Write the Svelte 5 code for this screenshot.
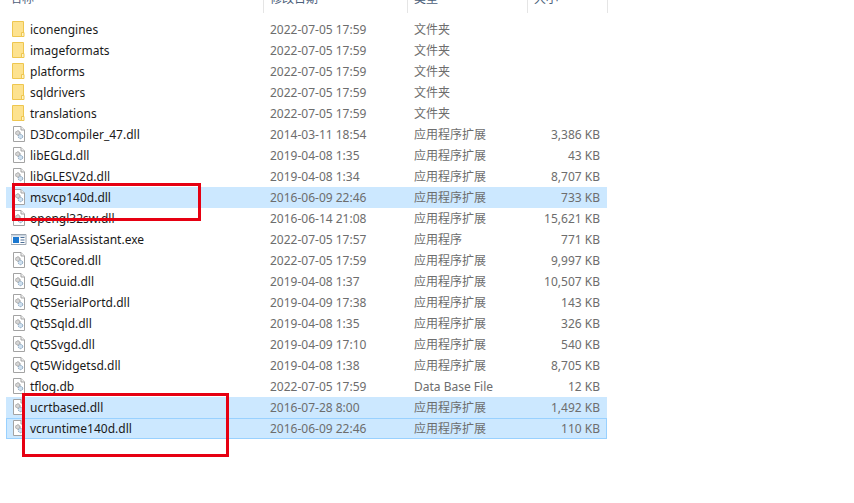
<script>
  const rows = [
    ['iconengines','2022-07-05 17:59','文件夹','','folder'],
    ['imageformats','2022-07-05 17:59','文件夹','','folder'],
    ['platforms','2022-07-05 17:59','文件夹','','folder'],
    ['sqldrivers','2022-07-05 17:59','文件夹','','folder'],
    ['translations','2022-07-05 17:59','文件夹','','folder'],
    ['D3Dcompiler_47.dll','2014-03-11 18:54','应用程序扩展','3,386 KB','dll'],
    ['libEGLd.dll','2019-04-08 1:35','应用程序扩展','43 KB','dll'],
    ['libGLESV2d.dll','2019-04-08 1:34','应用程序扩展','8,707 KB','dll'],
    ['msvcp140d.dll','2016-06-09 22:46','应用程序扩展','733 KB','dll','sel'],
    ['opengl32sw.dll','2016-06-14 21:08','应用程序扩展','15,621 KB','dll'],
    ['QSerialAssistant.exe','2022-07-05 17:57','应用程序','771 KB','exe'],
    ['Qt5Cored.dll','2022-07-05 17:59','应用程序扩展','9,997 KB','dll'],
    ['Qt5Guid.dll','2019-04-08 1:37','应用程序扩展','10,507 KB','dll'],
    ['Qt5SerialPortd.dll','2019-04-09 17:38','应用程序扩展','143 KB','dll'],
    ['Qt5Sqld.dll','2019-04-08 1:35','应用程序扩展','326 KB','dll'],
    ['Qt5Svgd.dll','2019-04-09 17:10','应用程序扩展','540 KB','dll'],
    ['Qt5Widgetsd.dll','2019-04-08 1:38','应用程序扩展','8,705 KB','dll'],
    ['tflog.db','2022-07-05 17:59','Data Base File','12 KB','dll'],
    ['ucrtbased.dll','2016-07-28 8:00','应用程序扩展','1,492 KB','dll','sel'],
    ['vcruntime140d.dll','2016-06-09 22:46','应用程序扩展','110 KB','dll','focus'],
  ];
</script>

<div class="page">
  <div class="head">
    <div class="hc first"><span>名称</span></div>
    <div class="hc"><span>修改日期</span></div>
    <div class="hc"><span>类型</span></div>
    <div class="hc"><span>大小</span></div>
  </div>
  <div class="list">
    {#each rows as r}
      <div class="row {r[5] ?? ''}">
        <div class="name">
          <svg class="icon" width="16" height="16" viewBox="0 0 16 16">
            {#if r[4] === 'folder'}
              <path d="M1.500 .5h11v15h-11z" fill="#fde28f" stroke="#eec64f"/>
              <path d="M10.500 15.500v-4h2.500v4z" fill="#fff3c4" stroke="#eec64f"/>
            {:else if r[4] === 'dll'}
              <path d="M2.500 .5h7.500l3.500 3.500v11.500h-11z" fill="#fff" stroke="#a3a3a3"/>
              <path d="M10 .5v3.500h3.500" fill="#f0f0f0" stroke="#a3a3a3"/>
              <circle cx="6.800" cy="7" r="2.200" fill="#d6d6d6" stroke="#939393" stroke-dasharray="1.500 .7"/>
              <circle cx="9.500" cy="10.500" r="2.200" fill="#cfe0ef" stroke="#86a3bd" stroke-dasharray="1.500 .7"/>
            {:else}
              <path d="M0 3.500h15v10H0z" fill="#fff" stroke="#9aa5b1"/>
              <path d="M.5 4h14v1.500H.5z" fill="#c8d4e0"/>
              <path d="M2 6h6v6H2z" fill="#1b78d0"/>
              <path d="M9.500 6.500h4M9.500 9h4M9.500 11.500h4" stroke="#4d6f96"/>
            {/if}
          </svg>
          <span>{r[0]}</span>
        </div>
        <div class="cell">{r[1]}</div>
        <div class="cell">{r[2]}</div>
        <div class="cell size">{r[3]}</div>
      </div>
    {/each}
  </div>
  <div class="mark m1"></div>
  <div class="mark m2"></div>
</div>

<style>
  :global(body) { margin: 0; background: #fff; }
  .page {
    position: relative;
    width: 854px;
    height: 503px;
    overflow: hidden;
    background: #fff;
    font: 12px/21px "Noto Sans", "Noto Sans CJK SC", sans-serif;
  }
  .head {
    display: grid;
    grid-template-columns: 258px 144px 120px 80px;
    margin-left: 6px;
    height: 13px;
    overflow: hidden;
    margin-bottom: 6px;
  }
  .hc {
    border-right: 1px solid #e5e5e5;
    color: #4c607a;
    height: 13px;
    line-height: 18px;
    padding-left: 6px;
    box-sizing: border-box;
  }
  .hc span { display: block; margin-top: -10px; }
  .hc.first { padding-left: 4px; }
  .list { margin-left: 6px; width: 601px; }
  .row {
    display: grid;
    grid-template-columns: 258px 144px 120px 79px;
    height: 21px;
    box-sizing: border-box;
    color: #6d6d6d;
  }
  .row.sel { background: #cce8ff; }
  .row.focus { background: #cce8ff; box-shadow: inset 0 0 0 1px #99d1ff; }
  .name { display: flex; align-items: flex-start; color: #1a1a1a; padding-left: 5px; }
  .icon { flex: none; margin: 2px 3px 0 0; }
  .cell { padding-left: 6px; }
  .size { text-align: right; padding-right: 7px; }
  .mark { position: absolute; border: 3px solid #e60012; box-sizing: border-box; }
  .m1 { left: 12px; top: 183px; width: 189px; height: 38px; }
  .m2 { left: 22px; top: 393px; width: 207px; height: 64px; }
</style>
